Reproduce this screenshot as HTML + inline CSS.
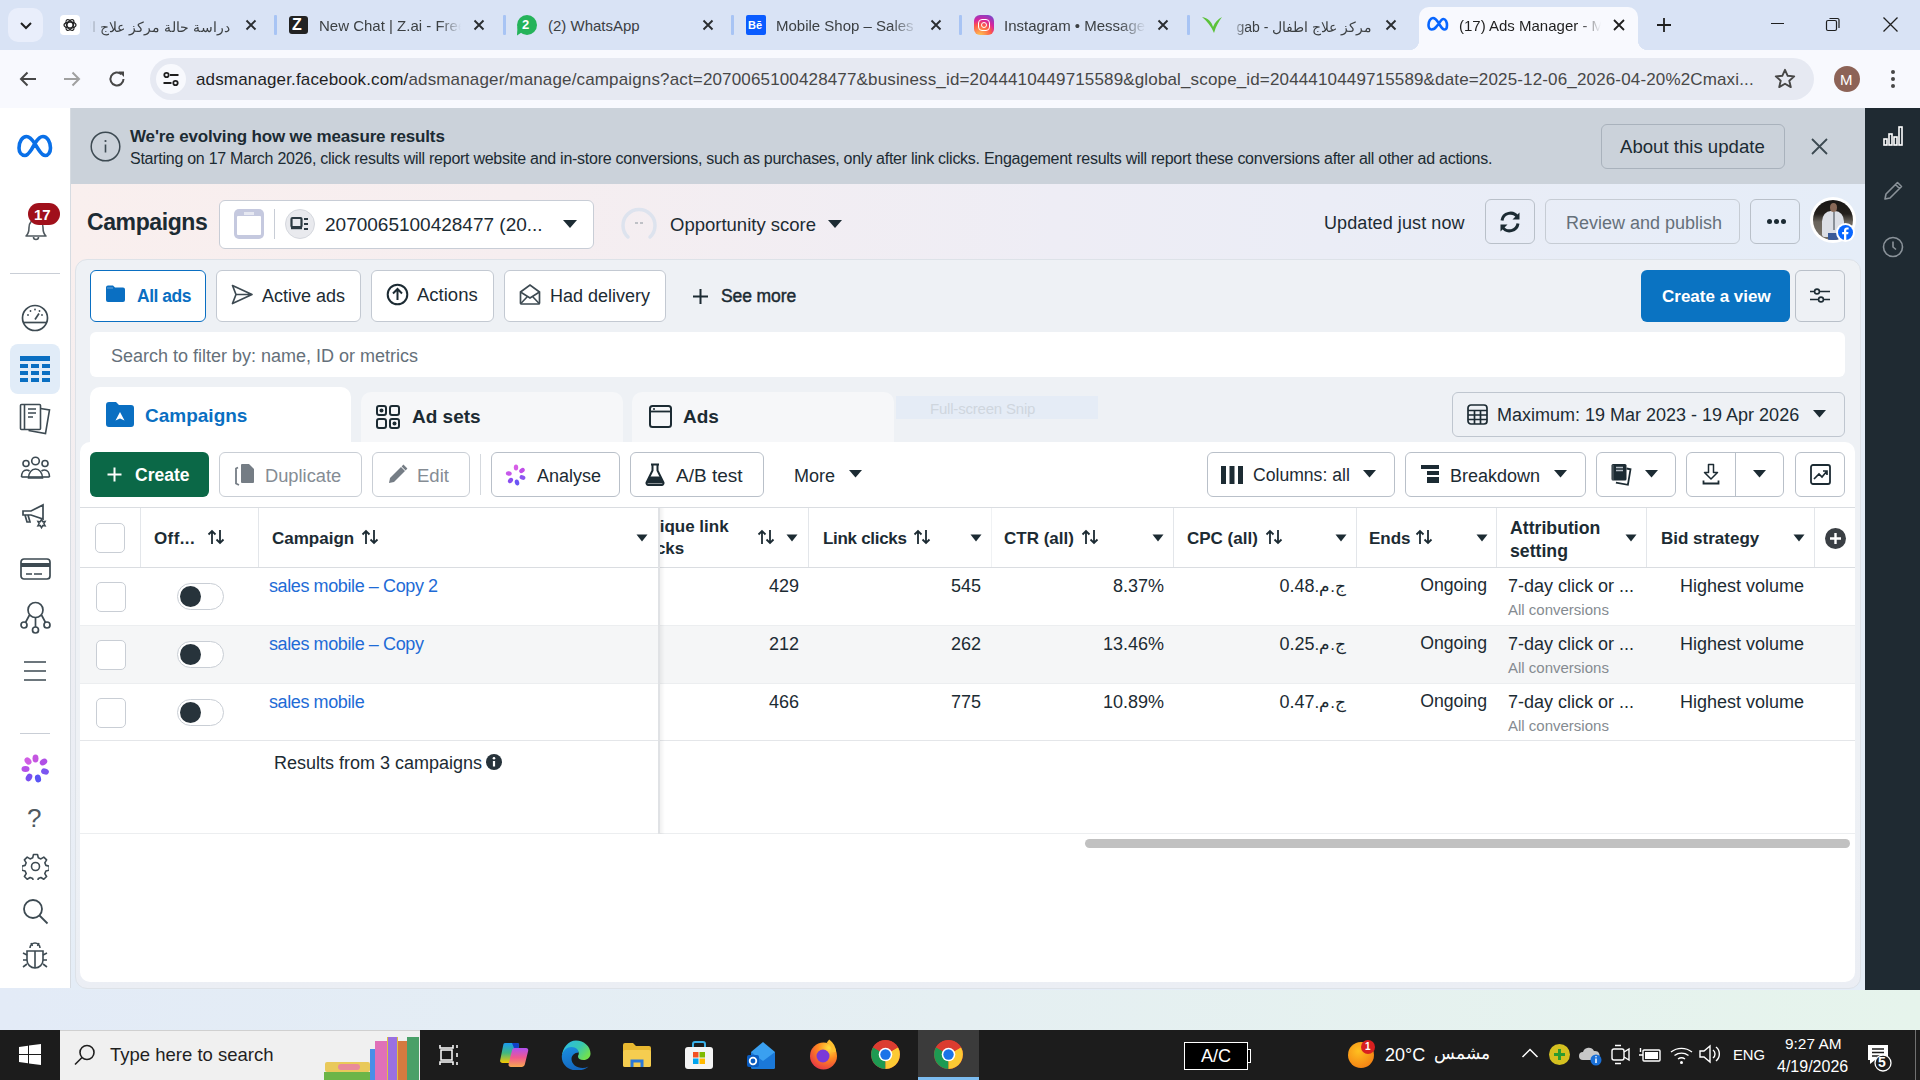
<!DOCTYPE html>
<html><head><meta charset="utf-8">
<style>
*{box-sizing:border-box;margin:0;padding:0}
html,body{width:1920px;height:1080px;overflow:hidden;background:linear-gradient(90deg,#e3ebf7 0%,#e5eff2 50%,#e6f4ec 100%);font-family:"Liberation Sans",sans-serif;color:#1c2b33}
.a{position:absolute}
.t{position:absolute;white-space:nowrap;line-height:1}
svg{display:block}
/* chrome */
#tabstrip{left:0;top:0;width:1920px;height:50px;background:#d9e3f5}
#toolbar{left:0;top:50px;width:1920px;height:58px;background:#f8f9fe}
#omni{left:150px;top:58px;width:1664px;height:42px;border-radius:21px;background:#e6e9f2}
.tab{position:absolute;top:0;height:50px}
.tabtitle{position:absolute;top:15.5px;font-size:15px;color:#1f1f1f;white-space:nowrap;line-height:20px}
.tabx{position:absolute;top:17px;width:16px;height:16px}
.tsep{position:absolute;top:15px;width:2.5px;height:20px;background:#a8c4f4;border-radius:1px}
/* page */
#leftnav{left:0;top:108px;width:71px;height:880px;background:#fff;border-right:1px solid #d6dbe1}
#rightbar{left:1865px;top:108px;width:55px;height:882px;background:#1f2a32}
#banner{left:70px;top:108px;width:1795px;height:76px;background:#cbd2da}
#header{left:70px;top:184px;width:1795px;height:806px;background:linear-gradient(180deg,rgba(228,237,247,0) 0px,rgba(228,237,247,0) 80px,rgba(228,237,247,1) 100%),linear-gradient(90deg,#f9efee 0%,#f6eef0 25%,#eeedf5 55%,#e5edf8 100%)}
#main{left:70px;top:260px;width:1794px;height:730px;background:linear-gradient(180deg,#eef1f5 0%,#eef1f5 60%,#e8eff5 100%)}
#taskbar{left:0;top:1030px;width:1920px;height:50px;background:#1c1c1c}
.btn{position:absolute;background:#fff;border:1px solid #c3c9d2;border-radius:6px}
.bt{position:absolute;white-space:nowrap;line-height:1;font-size:18px;color:#1c2b33}
</style></head><body>

<!-- ============ CHROME TAB STRIP ============ -->

<div id="tabstrip" class="a"></div>
<div class="a" style="left:8px;top:8px;width:35px;height:34px;border-radius:10px;background:#e9eefb"></div>
<svg class="a" style="left:18px;top:17px" width="16" height="16" viewBox="0 0 16 16"><path d="M3 6l5 5 5-5" fill="none" stroke="#1f1f1f" stroke-width="2"/></svg>
<!-- active tab -->
<div class="a" style="left:1419px;top:7px;width:219px;height:43px;background:#f8f9fe;border-radius:10px 10px 0 0"></div>
<div class="a" style="left:1409px;top:40px;width:10px;height:10px;background:radial-gradient(circle at 0 0,#d9e3f5 10px,#f8f9fe 10.5px)"></div>
<div class="a" style="left:1638px;top:40px;width:10px;height:10px;background:radial-gradient(circle at 100% 0,#d9e3f5 10px,#f8f9fe 10.5px)"></div>
<!-- tab 1 -->
<div class="a" style="left:60px;top:15px;width:20px;height:20px;background:#fff;border-radius:4px"></div>
<svg class="a" style="left:62px;top:17px" width="16" height="16" viewBox="0 0 16 16"><g fill="none" stroke="#222" stroke-width="1.3"><ellipse cx="8" cy="8" rx="6" ry="3" transform="rotate(0 8 8)"/><ellipse cx="8" cy="8" rx="6" ry="3" transform="rotate(60 8 8)"/><ellipse cx="8" cy="8" rx="6" ry="3" transform="rotate(120 8 8)"/></g></svg>
<div class="tabtitle" dir="rtl" style="left:90px;width:140px;overflow:hidden;text-align:right;font-size:14px;top:16.5px;color:#3c4043;-webkit-mask-image:linear-gradient(90deg,transparent 0,#000 14px)">دراسة حالة مركز علاج الاطفال</div>
<svg class="tabx" style="left:243px"><path d="M3.5 3.5l9 9M12.5 3.5l-9 9" stroke="#2a2d30" stroke-width="1.9"/></svg>
<div class="tsep" style="left:274px"></div>
<!-- tab 2 -->
<div class="a" style="left:289px;top:16px;width:19px;height:18px;background:#222;border-radius:3px"></div>
<div class="t" style="left:292px;top:17px;font-size:16px;font-weight:bold;color:#fff">Z</div>
<div class="tabtitle" style="left:319px;width:142px;overflow:hidden;-webkit-mask-image:linear-gradient(90deg,#000 120px,transparent 142px);color:#3c4043">New Chat | Z.ai - Free</div>
<svg class="tabx" style="left:471px"><path d="M3.5 3.5l9 9M12.5 3.5l-9 9" stroke="#2a2d30" stroke-width="1.9"/></svg>
<div class="tsep" style="left:503px"></div>
<!-- tab 3 -->
<div class="a" style="left:517px;top:15px;width:20px;height:20px;background:#25b35a;border-radius:50%"></div>
<div class="a" style="left:515px;top:28px;width:0;height:0;border-left:4px solid transparent;border-right:4px solid transparent;border-top:8px solid #25b35a;transform:rotate(30deg)"></div>
<div class="t" style="left:522px;top:18px;font-size:13px;font-weight:bold;color:#fff">2</div>
<div class="tabtitle" style="left:548px;color:#3c4043">(2) WhatsApp</div>
<svg class="tabx" style="left:700px"><path d="M3.5 3.5l9 9M12.5 3.5l-9 9" stroke="#2a2d30" stroke-width="1.9"/></svg>
<div class="tsep" style="left:731px"></div>
<!-- tab 4 -->
<div class="a" style="left:746px;top:15px;width:20px;height:20px;background:#0b5cff;border-radius:2px"></div>
<div class="t" style="left:748px;top:20px;font-size:11px;font-weight:bold;color:#fff">Bē</div>
<div class="tabtitle" style="left:776px;width:142px;overflow:hidden;-webkit-mask-image:linear-gradient(90deg,#000 115px,transparent 142px);color:#3c4043">Mobile Shop – Sales Dashboard</div>
<svg class="tabx" style="left:928px"><path d="M3.5 3.5l9 9M12.5 3.5l-9 9" stroke="#2a2d30" stroke-width="1.9"/></svg>
<div class="tsep" style="left:959px"></div>
<!-- tab 5 -->
<div class="a" style="left:974px;top:15px;width:20px;height:20px;border-radius:6px;background:radial-gradient(circle at 30% 105%,#fdcb52 0,#fd5949 45%,#d6249f 65%,#5b51d8 100%)"></div>
<div class="a" style="left:978px;top:19px;width:12px;height:12px;border:1.6px solid #fff;border-radius:4px"></div>
<div class="a" style="left:981px;top:22px;width:6px;height:6px;border:1.5px solid #fff;border-radius:50%"></div>
<div class="tabtitle" style="left:1004px;width:142px;overflow:hidden;-webkit-mask-image:linear-gradient(90deg,#000 115px,transparent 142px);color:#3c4043">Instagram • Messages</div>
<svg class="tabx" style="left:1155px"><path d="M3.5 3.5l9 9M12.5 3.5l-9 9" stroke="#2a2d30" stroke-width="1.9"/></svg>
<div class="tsep" style="left:1187px"></div>
<!-- tab 6 -->
<svg class="a" style="left:1200px;top:14px" width="24" height="22" viewBox="0 0 24 22"><path d="M2 3c6 1 10 5 11 10 2-5 5-8 9-10-3 4-6 9-8 16-3-7-7-12-12-16z" fill="#5cc23a"/></svg>
<div class="tabtitle" dir="rtl" style="left:1232px;width:140px;overflow:hidden;text-align:right;font-size:14px;top:16.5px;color:#3c4043;-webkit-mask-image:linear-gradient(90deg,transparent 0,#000 14px)">مركز علاج اطفال - gab</div>
<svg class="tabx" style="left:1383px"><path d="M3.5 3.5l9 9M12.5 3.5l-9 9" stroke="#2a2d30" stroke-width="1.9"/></svg>
<!-- tab 7 active -->
<svg class="a" style="left:1427px;top:16px" width="22" height="16" viewBox="0 0 22 16"><path d="M4.5 13.5C2.5 13.5 1.5 11.5 1.5 9c0-3.5 2-7 4.5-7 2.2 0 3.7 2 5 4.2L13.5 10c1.2 2 2.3 3.5 3.8 3.5 1.8 0 2.7-1.7 2.7-4.3 0-3.3-1.5-6.2-3.5-6.2-1.8 0-3 1.8-4.5 4.5L9.5 10.5c-1.5 2.3-2.8 3-5 3z" fill="none" stroke="#0866ff" stroke-width="2.6"/></svg>
<div class="tabtitle" style="left:1459px;width:142px;overflow:hidden;-webkit-mask-image:linear-gradient(90deg,#000 120px,transparent 142px)">(17) Ads Manager - Meta</div>
<svg class="tabx" style="left:1611px"><path d="M3 3l10 10M13 3L3 13" stroke="#1f1f1f" stroke-width="1.8"/></svg>
<!-- new tab -->
<svg class="a" style="left:1655px;top:16px" width="18" height="18" viewBox="0 0 18 18"><path d="M9 2v14M2 9h14" stroke="#1f1f1f" stroke-width="1.8"/></svg>
<!-- window controls -->
<div class="a" style="left:1771px;top:23px;width:13px;height:1px;background:#1f1f1f"></div>
<svg class="a" style="left:1825px;top:16px" width="16" height="16" viewBox="0 0 16 16"><g fill="none" stroke="#1f1f1f" stroke-width="1.2"><rect x="1.5" y="4.5" width="10" height="10" rx="1.5"/><path d="M4.5 2.5h8a1.5 1.5 0 0 1 1.5 1.5v8"/></g></svg>
<svg class="a" style="left:1882px;top:16px" width="17" height="17" viewBox="0 0 17 17"><path d="M1.5 1.5l14 14M15.5 1.5l-14 14" stroke="#1f1f1f" stroke-width="1.3"/></svg>

<div id="toolbar" class="a"></div>
<div id="omni" class="a"></div>
<svg class="a" style="left:17px;top:68px" width="22" height="22" viewBox="0 0 22 22"><path d="M19 11H4M10.5 4.5L4 11l6.5 6.5" fill="none" stroke="#474747" stroke-width="2"/></svg>
<svg class="a" style="left:61px;top:68px" width="22" height="22" viewBox="0 0 22 22"><path d="M3 11h15M11.5 4.5L18 11l-6.5 6.5" fill="none" stroke="#a0a0a0" stroke-width="2"/></svg>
<svg class="a" style="left:106px;top:68px" width="22" height="22" viewBox="0 0 22 22"><path d="M17.5 11a6.5 6.5 0 1 1-2-4.7" fill="none" stroke="#474747" stroke-width="2"/><path d="M12.5 3.5h5.5v5.5z" fill="#474747"/></svg>
<div class="a" style="left:156px;top:64px;width:30px;height:30px;border-radius:50%;background:#f8f9fd"></div>
<svg class="a" style="left:162px;top:70px" width="18" height="18" viewBox="0 0 18 18"><g fill="none" stroke="#1f1f1f" stroke-width="1.8"><circle cx="4.5" cy="5" r="2.2"/><path d="M8 5h8.5M1.5 13h8"/><circle cx="13.5" cy="13" r="2.2"/></g></svg>
<div class="t" style="left:196px;top:71px;font-size:17px;letter-spacing:0.15px;color:#1f1f1f">adsmanager.facebook.com/<span style="color:#474747">adsmanager/manage/campaigns?act=2070065100428477&amp;business_id=2044410449715589&amp;global_scope_id=2044410449715589&amp;date=2025-12-06_2026-04-20%2Cmaxi...</span></div>
<svg class="a" style="left:1773px;top:67px" width="24" height="24" viewBox="0 0 24 24"><path d="M12 2.8l2.7 6 6.5.6-4.9 4.3 1.5 6.4L12 16.7l-5.8 3.4 1.5-6.4-4.9-4.3 6.5-.6z" fill="none" stroke="#474747" stroke-width="1.9" stroke-linejoin="round"/></svg>
<div class="a" style="left:1834px;top:66px;width:26px;height:26px;border-radius:50%;background:#8d6357"></div>
<div class="t" style="left:1840px;top:72px;font-size:15px;color:#fff">M</div>
<div class="a" style="left:1891px;top:70px;width:4px;height:4px;border-radius:50%;background:#474747;box-shadow:0 7px 0 #474747,0 14px 0 #474747"></div>


<!-- ============ PAGE ============ -->

<div id="banner" class="a"></div>
<svg class="a" style="left:90px;top:131px" width="31" height="31" viewBox="0 0 31 31"><circle cx="15.5" cy="15.5" r="14.3" fill="none" stroke="#3d4a52" stroke-width="1.5"/><path d="M15.5 13.5v8" stroke="#3d4a52" stroke-width="1.6"/><circle cx="15.5" cy="10" r="1.1" fill="#3d4a52"/></svg>
<div class="t" style="left:130px;top:128px;font-size:17px;font-weight:bold;letter-spacing:-0.15px;color:#1c2b33">We're evolving how we measure results</div>
<div class="t" style="left:130px;top:151px;font-size:16px;letter-spacing:-0.265px;color:#1c2b33">Starting on 17 March 2026, click results will report website and in-store conversions, such as purchases, only after link clicks. Engagement results will report these conversions after all other ad actions.</div>
<div class="btn" style="left:1601px;top:124px;width:184px;height:45px;background:#cbd2da;border-color:#a9b2bc"></div>
<div class="bt" style="left:1620px;top:138px;font-size:18.6px">About this update</div>
<svg class="a" style="left:1810px;top:137px" width="19" height="19" viewBox="0 0 19 19"><path d="M2 2l15 15M17 2L2 17" stroke="#3d4a52" stroke-width="1.8"/></svg>

<div id="header" class="a"></div>
<div class="t" style="left:87px;top:211px;font-size:23px;font-weight:bold;letter-spacing:-0.4px;color:#1c2b33">Campaigns</div>
<div class="btn" style="left:219px;top:200px;width:375px;height:49px;border-color:#c8cdd6"></div>
<div class="a" style="left:234px;top:209px;width:30px;height:30px;border-radius:5px;background:#c5c9df"></div>
<div class="a" style="left:237px;top:216px;width:24px;height:19px;background:#fff;border-radius:1px"></div>
<div class="a" style="left:244px;top:212px;width:10px;height:3px;background:#e6e8f1"></div>
<div class="a" style="left:274px;top:209px;width:1px;height:30px;background:#c8cdd6"></div>
<div class="a" style="left:285px;top:209px;width:30px;height:30px;border-radius:50%;background:#e9eaee;border:1px solid #d5d8de"></div>
<svg class="a" style="left:290px;top:214px" width="20" height="20" viewBox="0 0 20 20"><rect x="1.5" y="4" width="10" height="9" rx="1" fill="none" stroke="#2c3a42" stroke-width="2.2"/><rect x="1" y="13" width="11" height="2.2" fill="#2c3a42"/><path d="M14 5h4M14 10h4M14 15h4" stroke="#2c3a42" stroke-width="1.8"/></svg>
<div class="bt" style="left:325px;top:215px;font-size:19px">2070065100428477 (20...</div>
<svg class="a" style="left:562px;top:219px" width="16" height="10" viewBox="0 0 16 10"><path d="M1 1h14L8 9z" fill="#1c2b33"/></svg>
<svg class="a" style="left:620px;top:206px" width="38" height="38" viewBox="0 0 38 38"><path d="M8 31A16 16 0 1 1 30 31" fill="none" stroke="#dde3ee" stroke-width="3.5" stroke-linecap="round"/><path d="M15 17h3M20 17h3" stroke="#8a939b" stroke-width="1.2"/></svg>
<div class="bt" style="left:670px;top:216px;font-size:18.5px">Opportunity score</div>
<svg class="a" style="left:827px;top:219px" width="16" height="10" viewBox="0 0 16 10"><path d="M1 1h14L8 9z" fill="#1c2b33"/></svg>
<div class="bt" style="left:1324px;top:214px;font-size:18px;letter-spacing:0.1px">Updated just now</div>
<div class="btn" style="left:1485px;top:199px;width:50px;height:45px;background:transparent;border-color:#b9c0c9"></div>
<svg class="a" style="left:1497px;top:209px" width="26" height="26" viewBox="0 0 26 26"><g fill="none" stroke="#1c2b33" stroke-width="3"><path d="M5 11.5a8.5 8.5 0 0 1 15.5-3.5"/><path d="M21 14.5a8.5 8.5 0 0 1-15.5 3.5"/></g><path d="M22.5 3.5v7h-7z" fill="#1c2b33"/><path d="M3.5 22.5v-7h7z" fill="#1c2b33"/></svg>
<div class="btn" style="left:1545px;top:199px;width:195px;height:45px;background:transparent;border-color:#c6ccd4"></div>
<div class="bt" style="left:1566px;top:214px;font-size:18px;color:#65707a">Review and publish</div>
<div class="btn" style="left:1750px;top:199px;width:50px;height:45px;background:transparent;border-color:#b9c0c9"></div>
<div class="a" style="left:1767px;top:219px;width:5px;height:5px;border-radius:50%;background:#1c2b33;box-shadow:7px 0 0 #1c2b33,14px 0 0 #1c2b33"></div>
<div class="a" style="left:1810px;top:197px;width:46px;height:46px;border-radius:50%;background:#fff"></div>
<div class="a" style="left:1813px;top:200px;width:40px;height:40px;border-radius:50%;overflow:hidden;background:linear-gradient(180deg,#1a1714 0%,#24201c 35%,#6a645c 55%,#7a746a 100%)">
<div class="a" style="left:9px;top:11px;width:22px;height:26px;border-radius:40% 40% 10% 10%;background:#dcdfe6"></div>
<div class="a" style="left:15px;top:33px;width:11px;height:8px;background:#3a5a98"></div>
<div class="a" style="left:17px;top:3px;width:7px;height:9px;border-radius:50%;background:#8a6a58"></div>
<div class="a" style="left:20px;top:12px;width:1.5px;height:18px;background:#8a9098"></div>
</div>
<div class="a" style="left:1836px;top:223px;width:19px;height:19px;border-radius:50%;background:#fff"></div>
<div class="a" style="left:1838px;top:225px;width:15px;height:15px;border-radius:50%;background:#0866ff"></div>
<svg class="a" style="left:1838px;top:225px" width="15" height="15" viewBox="0 0 15 15"><path d="M8.3 15V9.2h1.9l.3-2.2H8.3V5.6c0-.6.2-1.1 1.1-1.1h1.2V2.6c-.2 0-.9-.1-1.7-.1-1.7 0-2.9 1-2.9 2.9V7H4.1v2.2H6V15z" fill="#fff"/></svg>



<div class="a" style="left:75px;top:259px;width:1786px;height:730px;border-radius:12px;background:linear-gradient(180deg,#eef1f5 0%,#eef1f5 70%,#ebeef4 100%);border:1px solid #dde2e8"></div>
<!-- filter buttons -->
<div class="btn" style="left:90px;top:270px;width:116px;height:52px;border:1.5px solid #0a6fc2"></div>
<svg class="a" style="left:105px;top:284px" width="21" height="19" viewBox="0 0 21 19"><path d="M1 3.5a2 2 0 0 1 2-2h5l2 2h8a2 2 0 0 1 2 2V16a2 2 0 0 1-2 2H3a2 2 0 0 1-2-2z" fill="#0a6fc2"/><path d="M2 4h6" stroke="#6fa6d9" stroke-width="1"/></svg>
<div class="bt" style="left:137px;top:288px;font-size:17.5px;font-weight:bold;letter-spacing:-0.5px;color:#0a6fc2">All ads</div>
<div class="btn" style="left:216px;top:270px;width:145px;height:52px"></div>
<svg class="a" style="left:231px;top:284px" width="23" height="21" viewBox="0 0 23 21"><path d="M1.5 1.5L21 10.5 1.5 19.5 5 10.5z M5 10.5h16" fill="none" stroke="#3d4a52" stroke-width="1.7" stroke-linejoin="round"/></svg>
<div class="bt" style="left:262px;top:287px">Active ads</div>
<div class="btn" style="left:371px;top:270px;width:123px;height:52px"></div>
<svg class="a" style="left:386px;top:283px" width="23" height="23" viewBox="0 0 23 23"><circle cx="11.5" cy="11.5" r="9.8" fill="none" stroke="#1c2b33" stroke-width="2"/><path d="M11.5 17V6.5M7 10.5l4.5-4.5 4.5 4.5" fill="none" stroke="#1c2b33" stroke-width="2"/></svg>
<div class="bt" style="left:417px;top:286px;font-size:18.5px">Actions</div>
<div class="btn" style="left:504px;top:270px;width:162px;height:52px"></div>
<svg class="a" style="left:519px;top:283px" width="22" height="22" viewBox="0 0 22 22"><path d="M1.5 9L11 2l9.5 7v11a1 1 0 0 1-1 1h-17a1 1 0 0 1-1-1z" fill="none" stroke="#3d4a52" stroke-width="1.7"/><path d="M1.5 9L11 15l9.5-6M1.8 20.5L8.5 13.5M20.2 20.5L13.5 13.5" fill="none" stroke="#3d4a52" stroke-width="1.6"/></svg>
<div class="bt" style="left:550px;top:287px">Had delivery</div>
<svg class="a" style="left:691px;top:287px" width="19" height="19" viewBox="0 0 19 19"><path d="M9.5 2v15M2 9.5h15" stroke="#1c2b33" stroke-width="2"/></svg>
<div class="bt" style="left:721px;top:288px;font-size:17.5px;letter-spacing:-0.1px;-webkit-text-stroke:0.45px #1c2b33">See more</div>
<div class="a" style="left:1641px;top:270px;width:149px;height:52px;border-radius:6px;background:#0a73c2"></div>
<div class="bt" style="left:1662px;top:288px;font-size:17px;font-weight:bold;color:#fff">Create a view</div>
<div class="btn" style="left:1795px;top:270px;width:50px;height:52px;background:#eef1f5;border-color:#b9c0c9"></div>
<svg class="a" style="left:1808px;top:284px" width="24" height="24" viewBox="0 0 24 24"><g fill="none" stroke="#1c2b33" stroke-width="1.6"><path d="M2 7.5h4.5M11.5 7.5H22M2 15.5h8.5M15.5 15.5H22"/><circle cx="9" cy="7.5" r="2.4"/><circle cx="13" cy="15.5" r="2.4"/></g></svg>

<!-- level tabs -->
<div class="a" style="left:90px;top:387px;width:261px;height:60px;border-radius:10px 10px 0 0;background:#fff"></div>
<svg class="a" style="left:106px;top:402px" width="28" height="25" viewBox="0 0 28 25"><path d="M0 3a3 3 0 0 1 3-3h7l3 3h12a3 3 0 0 1 3 3v16a3 3 0 0 1-3 3H3a3 3 0 0 1-3-3z" fill="#0a6fc2"/><path d="M9.5 18.5L14 10l4.5 8.5L14 16.5z" fill="#fff"/></svg>
<div class="bt" style="left:145px;top:406px;font-size:19px;font-weight:bold;color:#0a6fc2">Campaigns</div>
<div class="a" style="left:361px;top:392px;width:262px;height:55px;border-radius:10px 10px 0 0;background:#f6f7f9"></div>
<svg class="a" style="left:376px;top:405px" width="24" height="24" viewBox="0 0 24 24"><g fill="none" stroke="#1c2b33" stroke-width="2"><rect x="1" y="1" width="9" height="9" rx="2"/><rect x="14" y="1" width="9" height="9" rx="2"/><rect x="1" y="14" width="9" height="9" rx="2"/><rect x="14" y="14" width="9" height="9" rx="2"/></g><circle cx="5.5" cy="5.5" r="2" fill="#1c2b33"/><circle cx="18.5" cy="18.5" r="2" fill="#1c2b33"/></svg>
<div class="bt" style="left:412px;top:407px;font-size:19px;font-weight:bold">Ad sets</div>
<div class="a" style="left:632px;top:392px;width:262px;height:55px;border-radius:10px 10px 0 0;background:#f6f7f9"></div>
<svg class="a" style="left:649px;top:405px" width="23" height="23" viewBox="0 0 23 23"><rect x="1" y="1" width="21" height="21" rx="2.5" fill="none" stroke="#1c2b33" stroke-width="2"/><path d="M1.5 6.5h20" stroke="#1c2b33" stroke-width="1.8"/><circle cx="5" cy="4" r="1" fill="#1c2b33"/></svg>
<div class="bt" style="left:683px;top:407px;font-size:19px;font-weight:bold">Ads</div>
<div class="a" style="left:896px;top:396px;width:202px;height:23px;background:#e5ecf6"></div>
<div class="bt" style="left:930px;top:401px;font-size:15px;letter-spacing:-0.2px;color:#cfd6de">Full-screen Snip</div>
<!-- date -->
<div class="btn" style="left:1452px;top:392px;width:393px;height:45px;background:#eef1f5;border-color:#bfc6cf"></div>
<svg class="a" style="left:1467px;top:404px" width="21" height="21" viewBox="0 0 21 21"><g fill="none" stroke="#1c2b33" stroke-width="1.7"><rect x="1" y="1" width="19" height="19" rx="3"/><path d="M1 6.5h19M1 11h19M1 15.5h19M7.5 6.5V20M13.5 6.5V20"/></g></svg>
<div class="bt" style="left:1497px;top:406px;font-size:18px">Maximum: 19 Mar 2023 - 19 Apr 2026</div>
<svg class="a" style="left:1813px;top:410px" width="13" height="8" viewBox="0 0 13 8"><path d="M0 0h13L6.5 7.5z" fill="#1c2b33"/></svg>
<!-- table card -->
<div class="a" style="left:80px;top:442px;width:1775px;height:540px;border-radius:10px;background:#fff"></div>
<div class="a" style="left:90px;top:430px;width:261px;height:20px;background:#fff"></div>
<!-- toolbar -->
<div class="a" style="left:90px;top:452px;width:119px;height:45px;border-radius:6px;background:#0b6847"></div>
<svg class="a" style="left:107px;top:467px" width="15" height="15" viewBox="0 0 15 15"><path d="M7.5 0.5v14M0.5 7.5h14" stroke="#fff" stroke-width="2"/></svg>
<div class="bt" style="left:135px;top:467px;font-size:17.5px;font-weight:bold;color:#fff">Create</div>
<div class="btn" style="left:219px;top:452px;width:143px;height:45px;border-color:#c9ced5"></div>
<svg class="a" style="left:233px;top:463px" width="22" height="23" viewBox="0 0 22 23"><path d="M9 1h7l5 5v13a1 1 0 0 1-1 1H9a1 1 0 0 1-1-1V2a1 1 0 0 1 1-1z" fill="#757d85"/><path d="M5 4.5L3 5.5v15l3 1.5" fill="none" stroke="#757d85" stroke-width="1.8"/></svg>
<div class="bt" style="left:265px;top:467px;font-size:18.3px;color:#858c94">Duplicate</div>
<div class="btn" style="left:372px;top:452px;width:98px;height:45px;border-color:#c9ced5"></div>
<svg class="a" style="left:387px;top:464px" width="21" height="21" viewBox="0 0 21 21"><path d="M2 19l1-5L14 3l4 4L7 18z" fill="#757d85"/><path d="M15.5 1.5l4 4" stroke="#757d85" stroke-width="2.5"/></svg>
<div class="bt" style="left:417px;top:467px;font-size:18.5px;color:#858c94">Edit</div>
<div class="a" style="left:480px;top:454px;width:1px;height:41px;background:#d5d9de"></div>
<div class="btn" style="left:491px;top:452px;width:129px;height:45px;border-color:#b9c0c9"></div>
<svg class="a" style="left:505px;top:464px" width="22" height="22" viewBox="0 0 22 22"><g><ellipse cx="11" cy="3.5" rx="2.2" ry="3" fill="#d65ee6"/><ellipse cx="17" cy="6.5" rx="2.2" ry="3" transform="rotate(55 17 6.5)" fill="#c04ee8"/><ellipse cx="17.5" cy="13.5" rx="2.2" ry="3" transform="rotate(110 17.5 13.5)" fill="#8a55f0"/><ellipse cx="12" cy="18.5" rx="2.2" ry="3" transform="rotate(165 12 18.5)" fill="#6a55f5"/><ellipse cx="5.5" cy="16.5" rx="2.2" ry="3" transform="rotate(-140 5.5 16.5)" fill="#8a4ef0"/><ellipse cx="3.8" cy="9.5" rx="2.2" ry="3" transform="rotate(-80 3.8 9.5)" fill="#c658ea"/></g></svg>
<div class="bt" style="left:537px;top:467px;font-size:18px">Analyse</div>
<div class="btn" style="left:630px;top:452px;width:134px;height:45px;border-color:#b9c0c9"></div>
<svg class="a" style="left:645px;top:463px" width="20" height="23" viewBox="0 0 20 23"><path d="M6 1.5h8M7.5 1.5v6L1.5 19.5a2 2 0 0 0 1.8 2.5h13.4a2 2 0 0 0 1.8-2.5L12.5 7.5v-6" fill="none" stroke="#1c2b33" stroke-width="2"/><path d="M4.5 13.5h11l3 7H1.5z" fill="#1c2b33"/></svg>
<div class="bt" style="left:676px;top:466px;font-size:19px">A/B test</div>
<div class="bt" style="left:794px;top:467px;font-size:18px">More</div>
<svg class="a" style="left:849px;top:470px" width="13" height="8" viewBox="0 0 13 8"><path d="M0 0h13L6.5 7.5z" fill="#1c2b33"/></svg>
<div class="btn" style="left:1207px;top:452px;width:188px;height:45px;border-color:#b9c0c9"></div>
<svg class="a" style="left:1221px;top:466px" width="22" height="18" viewBox="0 0 22 18"><rect x="0" y="0" width="5" height="18" fill="#1c2b33"/><rect x="8.5" y="0" width="5" height="18" fill="#1c2b33"/><rect x="17" y="0" width="5" height="18" fill="#1c2b33"/></svg>
<div class="bt" style="left:1253px;top:467px;font-size:17.6px">Columns: all</div>
<svg class="a" style="left:1363px;top:470px" width="13" height="8" viewBox="0 0 13 8"><path d="M0 0h13L6.5 7.5z" fill="#1c2b33"/></svg>
<div class="btn" style="left:1405px;top:452px;width:181px;height:45px;border-color:#b9c0c9"></div>
<svg class="a" style="left:1421px;top:465px" width="20" height="20" viewBox="0 0 20 20"><rect x="0" y="0" width="18" height="4" fill="#1c2b33"/><rect x="6" y="6" width="12" height="4" fill="#1c2b33"/><rect x="6" y="12" width="12" height="6" fill="#1c2b33"/></svg>
<div class="bt" style="left:1450px;top:467px;font-size:18px">Breakdown</div>
<svg class="a" style="left:1554px;top:470px" width="13" height="8" viewBox="0 0 13 8"><path d="M0 0h13L6.5 7.5z" fill="#1c2b33"/></svg>
<div class="btn" style="left:1596px;top:452px;width:80px;height:45px;border-color:#b9c0c9"></div>
<svg class="a" style="left:1610px;top:463px" width="23" height="23" viewBox="0 0 23 23"><path d="M16.5 5.5l4 .8-2.6 15.5-12-2.2" fill="none" stroke="#1c2b33" stroke-width="1.8"/><rect x="1.5" y="1" width="15" height="16.5" rx="1.5" fill="#1c2b33"/><path d="M6 4.5h7M6 7.5h7" stroke="#b8c0c8" stroke-width="1.3"/><path d="M3 2v15" stroke="#fff" stroke-width="0.6" opacity="0.5"/></svg>
<svg class="a" style="left:1645px;top:470px" width="13" height="8" viewBox="0 0 13 8"><path d="M0 0h13L6.5 7.5z" fill="#1c2b33"/></svg>
<div class="btn" style="left:1686px;top:452px;width:98px;height:45px;border-color:#b9c0c9"></div>
<div class="a" style="left:1735px;top:453px;width:1px;height:43px;background:#b9c0c9"></div>
<svg class="a" style="left:1702px;top:463px" width="18" height="22" viewBox="0 0 18 22"><path d="M6.5 1.5h5v8h4L9 16 2.5 9.5h4z" fill="none" stroke="#1c2b33" stroke-width="1.5" stroke-linejoin="round"/><path d="M1.5 17.5v3h15v-3" fill="none" stroke="#1c2b33" stroke-width="1.8"/></svg>
<svg class="a" style="left:1753px;top:470px" width="13" height="8" viewBox="0 0 13 8"><path d="M0 0h13L6.5 7.5z" fill="#1c2b33"/></svg>
<div class="btn" style="left:1795px;top:452px;width:50px;height:45px;border-color:#b9c0c9"></div>
<svg class="a" style="left:1810px;top:464px" width="21" height="21" viewBox="0 0 21 21"><rect x="1" y="1" width="19" height="19" rx="2" fill="none" stroke="#1c2b33" stroke-width="1.8"/><path d="M4 15l5-5 3 3 5-6M13 7h4v4" fill="none" stroke="#1c2b33" stroke-width="1.7"/></svg>


<!-- table -->
<div class="a" style="left:80px;top:507px;width:1775px;height:1px;background:#dadde1"></div>
<div class="a" style="left:80px;top:567px;width:1775px;height:1px;background:#dadde1"></div>
<div class="a" style="left:140px;top:508px;width:1px;height:59px;background:#e3e6ea"></div>
<div class="a" style="left:258px;top:508px;width:1px;height:59px;background:#e3e6ea"></div>
<div class="a" style="left:808px;top:508px;width:1px;height:59px;background:#e3e6ea"></div>
<div class="a" style="left:1173px;top:508px;width:1px;height:59px;background:#e3e6ea"></div>
<div class="a" style="left:1356px;top:508px;width:1px;height:59px;background:#e3e6ea"></div>
<div class="a" style="left:1496px;top:508px;width:1px;height:59px;background:#e3e6ea"></div>
<div class="a" style="left:1646px;top:508px;width:1px;height:59px;background:#e3e6ea"></div>
<div class="a" style="left:1814px;top:508px;width:1px;height:59px;background:#e3e6ea"></div>
<div class="a" style="left:991px;top:508px;width:1px;height:59px;background:#f0f2f4"></div>
<div class="a" style="left:80px;top:625px;width:1775px;height:58px;background:#f5f6f7"></div>
<div class="a" style="left:80px;top:625px;width:1775px;height:1px;background:#eceef0"></div>
<div class="a" style="left:80px;top:683px;width:1775px;height:1px;background:#eceef0"></div>
<div class="a" style="left:80px;top:740px;width:1775px;height:1px;background:#e4e6e9"></div>
<div class="a" style="left:80px;top:833px;width:1775px;height:1px;background:#eceef0"></div>
<div class="a" style="left:658px;top:508px;width:2px;height:326px;background:#e0e2e5"></div>
<div class="a" style="left:660px;top:508px;width:5px;height:326px;background:linear-gradient(90deg,rgba(0,0,0,0.06),rgba(0,0,0,0))"></div>
<div class="a" style="left:95px;top:523px;width:30px;height:30px;border:1px solid #c9ced5;border-radius:5px;background:#fff"></div>
<div class="bt" style="left:154px;top:530px;font-size:17px;font-weight:bold;letter-spacing:0.4px">Off...</div>
<svg class="a" style="left:207px;top:529px" width="18" height="16" viewBox="0 0 18 16"><g fill="none" stroke="#1c2b33" stroke-width="1.8"><path d="M5 15V2M1.5 5.5L5 2l3.5 3.5"/><path d="M13 1v13M9.5 10.5L13 14l3.5-3.5"/></g></svg>
<div class="bt" style="left:272px;top:530px;font-size:17px;font-weight:bold">Campaign</div>
<svg class="a" style="left:361px;top:529px" width="18" height="16" viewBox="0 0 18 16"><g fill="none" stroke="#1c2b33" stroke-width="1.8"><path d="M5 15V2M1.5 5.5L5 2l3.5 3.5"/><path d="M13 1v13M9.5 10.5L13 14l3.5-3.5"/></g></svg>
<svg class="a" style="left:636px;top:534px" width="12" height="8" viewBox="0 0 12 8"><path d="M0.5 0.5h11L6 7.5z" fill="#1c2b33"/></svg>
<div class="a" style="left:660px;top:510px;width:148px;height:55px;overflow:hidden"><div class="bt" style="left:-23px;top:6px;font-size:17px;font-weight:bold;line-height:22px">Unique link<br>clicks</div></div>
<svg class="a" style="left:757px;top:529px" width="18" height="16" viewBox="0 0 18 16"><g fill="none" stroke="#1c2b33" stroke-width="1.8"><path d="M5 15V2M1.5 5.5L5 2l3.5 3.5"/><path d="M13 1v13M9.5 10.5L13 14l3.5-3.5"/></g></svg>
<svg class="a" style="left:786px;top:534px" width="12" height="8" viewBox="0 0 12 8"><path d="M0.5 0.5h11L6 7.5z" fill="#1c2b33"/></svg>
<div class="bt" style="left:823px;top:530px;font-size:17px;font-weight:bold;letter-spacing:-0.3px">Link clicks</div>
<svg class="a" style="left:913px;top:529px" width="18" height="16" viewBox="0 0 18 16"><g fill="none" stroke="#1c2b33" stroke-width="1.8"><path d="M5 15V2M1.5 5.5L5 2l3.5 3.5"/><path d="M13 1v13M9.5 10.5L13 14l3.5-3.5"/></g></svg>
<svg class="a" style="left:970px;top:534px" width="12" height="8" viewBox="0 0 12 8"><path d="M0.5 0.5h11L6 7.5z" fill="#1c2b33"/></svg>
<div class="bt" style="left:1004px;top:530px;font-size:17px;font-weight:bold">CTR (all)</div>
<svg class="a" style="left:1081px;top:529px" width="18" height="16" viewBox="0 0 18 16"><g fill="none" stroke="#1c2b33" stroke-width="1.8"><path d="M5 15V2M1.5 5.5L5 2l3.5 3.5"/><path d="M13 1v13M9.5 10.5L13 14l3.5-3.5"/></g></svg>
<svg class="a" style="left:1152px;top:534px" width="12" height="8" viewBox="0 0 12 8"><path d="M0.5 0.5h11L6 7.5z" fill="#1c2b33"/></svg>
<div class="bt" style="left:1187px;top:530px;font-size:17px;font-weight:bold">CPC (all)</div>
<svg class="a" style="left:1265px;top:529px" width="18" height="16" viewBox="0 0 18 16"><g fill="none" stroke="#1c2b33" stroke-width="1.8"><path d="M5 15V2M1.5 5.5L5 2l3.5 3.5"/><path d="M13 1v13M9.5 10.5L13 14l3.5-3.5"/></g></svg>
<svg class="a" style="left:1335px;top:534px" width="12" height="8" viewBox="0 0 12 8"><path d="M0.5 0.5h11L6 7.5z" fill="#1c2b33"/></svg>
<div class="bt" style="left:1369px;top:530px;font-size:17px;font-weight:bold">Ends</div>
<svg class="a" style="left:1415px;top:529px" width="18" height="16" viewBox="0 0 18 16"><g fill="none" stroke="#1c2b33" stroke-width="1.8"><path d="M5 15V2M1.5 5.5L5 2l3.5 3.5"/><path d="M13 1v13M9.5 10.5L13 14l3.5-3.5"/></g></svg>
<svg class="a" style="left:1476px;top:534px" width="12" height="8" viewBox="0 0 12 8"><path d="M0.5 0.5h11L6 7.5z" fill="#1c2b33"/></svg>
<div class="bt" style="left:1510px;top:517px;font-size:17.7px;font-weight:bold;line-height:23px">Attribution<br>setting</div>
<svg class="a" style="left:1625px;top:534px" width="12" height="8" viewBox="0 0 12 8"><path d="M0.5 0.5h11L6 7.5z" fill="#1c2b33"/></svg>
<div class="bt" style="left:1661px;top:530px;font-size:17px;font-weight:bold">Bid strategy</div>
<svg class="a" style="left:1793px;top:534px" width="12" height="8" viewBox="0 0 12 8"><path d="M0.5 0.5h11L6 7.5z" fill="#1c2b33"/></svg>
<svg class="a" style="left:1825px;top:528px" width="21" height="21" viewBox="0 0 21 21"><circle cx="10.5" cy="10.5" r="10.5" fill="#3a3f44"/><path d="M10.5 5v11M5 10.5h11" stroke="#fff" stroke-width="2.4"/></svg>
<div class="a" style="left:96px;top:582px;width:30px;height:30px;border:1px solid #c9ced5;border-radius:5px;background:#fff"></div>
<div class="a" style="left:177px;top:583px;width:47px;height:27px;border:1px solid #c9ced5;border-radius:14px;background:#fff"></div>
<div class="a" style="left:180px;top:586px;width:21px;height:21px;border-radius:50%;background:#27333b"></div>
<div class="bt" style="left:269px;top:577px;font-size:18px;letter-spacing:-0.4px;color:#1e6bd6">sales mobile – Copy 2</div>
<div class="bt" style="right:1121px;top:577px;font-size:18px;color:#1c2b33">429</div>
<div class="bt" style="right:939px;top:577px;font-size:18px;color:#1c2b33">545</div>
<div class="bt" style="right:756px;top:577px;font-size:18px;color:#1c2b33">8.37%</div>
<div class="bt" style="right:574px;top:577px;font-size:18px;color:#1c2b33"><span>0.48</span><span style="font-size:17px">.ج.م</span></div>
<div class="bt" style="right:433px;top:577px;font-size:17.7px;color:#1c2b33">Ongoing</div>
<div class="bt" style="left:1508px;top:577px;font-size:18px;color:#1c2b33">7-day click or ...</div>
<div class="bt" style="left:1508px;top:602px;font-size:15px;color:#858b91">All conversions</div>
<div class="bt" style="left:1680px;top:577px;font-size:18px;color:#1c2b33">Highest volume</div>
<div class="a" style="left:96px;top:640px;width:30px;height:30px;border:1px solid #c9ced5;border-radius:5px;background:#fff"></div>
<div class="a" style="left:177px;top:641px;width:47px;height:27px;border:1px solid #c9ced5;border-radius:14px;background:#fff"></div>
<div class="a" style="left:180px;top:644px;width:21px;height:21px;border-radius:50%;background:#27333b"></div>
<div class="bt" style="left:269px;top:635px;font-size:18px;letter-spacing:-0.4px;color:#1e6bd6">sales mobile – Copy</div>
<div class="bt" style="right:1121px;top:635px;font-size:18px;color:#1c2b33">212</div>
<div class="bt" style="right:939px;top:635px;font-size:18px;color:#1c2b33">262</div>
<div class="bt" style="right:756px;top:635px;font-size:18px;color:#1c2b33">13.46%</div>
<div class="bt" style="right:574px;top:635px;font-size:18px;color:#1c2b33"><span>0.25</span><span style="font-size:17px">.ج.م</span></div>
<div class="bt" style="right:433px;top:635px;font-size:17.7px;color:#1c2b33">Ongoing</div>
<div class="bt" style="left:1508px;top:635px;font-size:18px;color:#1c2b33">7-day click or ...</div>
<div class="bt" style="left:1508px;top:660px;font-size:15px;color:#858b91">All conversions</div>
<div class="bt" style="left:1680px;top:635px;font-size:18px;color:#1c2b33">Highest volume</div>
<div class="a" style="left:96px;top:698px;width:30px;height:30px;border:1px solid #c9ced5;border-radius:5px;background:#fff"></div>
<div class="a" style="left:177px;top:699px;width:47px;height:27px;border:1px solid #c9ced5;border-radius:14px;background:#fff"></div>
<div class="a" style="left:180px;top:702px;width:21px;height:21px;border-radius:50%;background:#27333b"></div>
<div class="bt" style="left:269px;top:693px;font-size:18px;letter-spacing:-0.4px;color:#1e6bd6">sales mobile</div>
<div class="bt" style="right:1121px;top:693px;font-size:18px;color:#1c2b33">466</div>
<div class="bt" style="right:939px;top:693px;font-size:18px;color:#1c2b33">775</div>
<div class="bt" style="right:756px;top:693px;font-size:18px;color:#1c2b33">10.89%</div>
<div class="bt" style="right:574px;top:693px;font-size:18px;color:#1c2b33"><span>0.47</span><span style="font-size:17px">.ج.م</span></div>
<div class="bt" style="right:433px;top:693px;font-size:17.7px;color:#1c2b33">Ongoing</div>
<div class="bt" style="left:1508px;top:693px;font-size:18px;color:#1c2b33">7-day click or ...</div>
<div class="bt" style="left:1508px;top:718px;font-size:15px;color:#858b91">All conversions</div>
<div class="bt" style="left:1680px;top:693px;font-size:18px;color:#1c2b33">Highest volume</div>
<div class="bt" style="left:274px;top:754px;font-size:18px;color:#1c2b33">Results from 3 campaigns</div>
<svg class="a" style="left:486px;top:754px" width="16" height="16" viewBox="0 0 16 16"><circle cx="8" cy="8" r="8" fill="#27333b"/><path d="M8 7v5.5" stroke="#fff" stroke-width="2.2"/><circle cx="8" cy="4.3" r="1.3" fill="#fff"/></svg>
<div class="a" style="left:1085px;top:839px;width:765px;height:9px;border-radius:5px;background:#c1c1c1"></div>
<!-- search -->
<div class="a" style="left:90px;top:332px;width:1755px;height:45px;border-radius:6px;background:#fff"></div>
<div class="bt" style="left:111px;top:347px;font-size:18px;color:#65707a">Search to filter by: name, ID or metrics</div>


<div id="leftnav" class="a"></div>
<svg class="a" style="left:17px;top:134px" width="36" height="24" viewBox="0 0 36 24"><path d="M8 21.5C4.5 21.5 2 18.5 2 14 2 7.5 5.5 2.5 9.5 2.5c3.5 0 6 3.5 8.5 7.5l3.5 5.5c2.3 3.6 4 6 6.8 6 2.8 0 5.2-3 5.2-7.5 0-6.2-3.2-11.5-7.5-11.5-3 0-5.3 2.5-7.8 6.5L14.5 15.5C12.2 19 10.5 21.5 8 21.5z" fill="none" stroke="#0a70e8" stroke-width="3.6"/></svg>
<svg class="a" style="left:22px;top:214px" width="28" height="28" viewBox="0 0 28 28"><path d="M4 22c2.5-2 3-4.5 3-8.5C7 9 10 5.5 14 5.5S21 9 21 13.5c0 4 .5 6.5 3 8.5z" fill="none" stroke="#50595f" stroke-width="1.6" stroke-linejoin="round"/><path d="M11.5 23a2.5 2.5 0 0 0 5 0" fill="none" stroke="#50595f" stroke-width="1.6"/></svg>
<div class="a" style="left:28px;top:203px;width:32px;height:22px;border-radius:11px;background:#a0101b"></div>
<div class="t" style="left:34px;top:207px;font-size:15px;font-weight:bold;color:#fff">17</div>
<div class="a" style="left:10px;top:273px;width:50px;height:1px;background:#c9ced6"></div>
<svg class="a" style="left:21px;top:304px" width="28" height="28" viewBox="0 0 28 28"><g fill="none" stroke="#3d4a52" stroke-width="1.7"><circle cx="14" cy="14" r="12.5"/><path d="M2.5 18.5h23"/><path d="M14 15.5l4-6"/></g><g fill="#3d4a52"><circle cx="7" cy="11" r="0.9"/><circle cx="9.5" cy="7" r="0.9"/><circle cx="14" cy="5.5" r="0.9"/><circle cx="21" cy="11" r="0.9"/><circle cx="18.5" cy="7" r="0.9"/></g></svg>
<div class="a" style="left:10px;top:344px;width:50px;height:50px;border-radius:8px;background:#e1ecf8"></div>
<svg class="a" style="left:20px;top:356px" width="30" height="26" viewBox="0 0 30 26"><rect x="0" y="0" width="30" height="5" fill="#0a6fc2"/><g fill="#0a6fc2"><rect x="0" y="8" width="8" height="4"/><rect x="11" y="8" width="8" height="4"/><rect x="22" y="8" width="8" height="4"/><rect x="0" y="15" width="8" height="4"/><rect x="11" y="15" width="8" height="4"/><rect x="22" y="15" width="8" height="4"/><rect x="0" y="22" width="8" height="4"/><rect x="11" y="22" width="8" height="4"/><rect x="22" y="22" width="8" height="4"/></g></svg>
<svg class="a" style="left:19px;top:403px" width="33" height="32" viewBox="0 0 33 32"><g fill="none" stroke="#3d4a52" stroke-width="1.6"><rect x="1.5" y="1.5" width="20" height="25" rx="1"/><path d="M5.5 1.5v25M9 6h8M9 10h8M9 14h5"/><path d="M21.5 5.5l9 1.5-4 23.5-17-3"/></g></svg>
<svg class="a" style="left:20px;top:456px" width="31" height="24" viewBox="0 0 31 24"><g fill="none" stroke="#3d4a52" stroke-width="1.6"><circle cx="15.5" cy="5" r="3.8"/><circle cx="6" cy="7.5" r="3"/><circle cx="25" cy="7.5" r="3"/><path d="M8.5 22c0-5 3-9 7-9s7 4 7 9z"/><path d="M1.5 21c0-4 2-7 5-7 1.2 0 2.2.4 3 1M29.5 21c0-4-2-7-5-7-1.2 0-2.2.4-3 1"/><path d="M1.5 21h28"/></g></svg>
<svg class="a" style="left:21px;top:503px" width="29" height="28" viewBox="0 0 29 28"><g fill="none" stroke="#3d4a52" stroke-width="1.7"><path d="M2 8h8l12-6v14l-12-4H2z"/><path d="M4 12l2 7h3l-2-7"/></g><path d="M20.5 16.5l1.2 2.2 2.4-.3-1.2 2.2 1.2 2.2-2.4-.2-1.2 2.2-1.2-2.2-2.4.2 1.2-2.2-1.2-2.2 2.4.3z" fill="none" stroke="#3d4a52" stroke-width="1.5"/></svg>
<svg class="a" style="left:20px;top:558px" width="31" height="22" viewBox="0 0 31 22"><g fill="none" stroke="#3d4a52" stroke-width="1.7"><rect x="1" y="1" width="29" height="20" rx="3"/></g><rect x="1" y="5" width="29" height="4" fill="#3d4a52"/><path d="M6 16h6M14 16h8" stroke="#3d4a52" stroke-width="1.5"/></svg>
<svg class="a" style="left:20px;top:601px" width="31" height="33" viewBox="0 0 31 33"><g fill="none" stroke="#3d4a52" stroke-width="1.7"><circle cx="15.5" cy="9" r="7.5"/><circle cx="4" cy="24" r="3"/><circle cx="27" cy="24" r="3"/><circle cx="15.5" cy="29" r="3"/><path d="M15.5 16.5V26M9.5 14l-4 7.5M21.5 14l4 7.5"/></g></svg>
<svg class="a" style="left:23px;top:660px" width="24" height="22" viewBox="0 0 24 22"><path d="M1 2h22M1 11h22M1 20h22" stroke="#3d4a52" stroke-width="1.6"/></svg>
<div class="a" style="left:20px;top:733px;width:30px;height:1px;background:#c9ced6"></div>
<svg class="a" style="left:21px;top:754px" width="30" height="30" viewBox="0 0 30 30"><ellipse cx="14.5" cy="4.5" rx="3" ry="4" fill="#c455e0"/><ellipse cx="22.5" cy="8" rx="3" ry="4" transform="rotate(55 22.5 8)" fill="#b04fe6"/><ellipse cx="24" cy="17.5" rx="3" ry="4" transform="rotate(110 24 17.5)" fill="#7c55f0"/><ellipse cx="17" cy="24.5" rx="3" ry="4" transform="rotate(165 17 24.5)" fill="#5a55f5"/><ellipse cx="8" cy="23.5" rx="3" ry="4" transform="rotate(-150 8 23.5)" fill="#7a4ff0"/><ellipse cx="4.5" cy="15" rx="3" ry="4" transform="rotate(-90 4.5 15)" fill="#b651e8"/><ellipse cx="7" cy="7" rx="3" ry="4" transform="rotate(-40 7 7)" fill="#d05de4"/></svg>
<div class="t" style="left:27px;top:805px;font-size:26px;color:#50595f">?</div>
<svg class="a" style="left:22px;top:853px" width="27" height="27" viewBox="0 0 27 27"><g fill="none" stroke="#3d4a52" stroke-width="1.6"><circle cx="13.5" cy="13.5" r="4"/><path d="M11.5 1.5h4l.8 3.3 2.6 1.1 2.9-1.8 2.8 2.8-1.8 2.9 1.1 2.6 3.3.8v4l-3.3.8-1.1 2.6 1.8 2.9-2.8 2.8-2.9-1.8-2.6 1.1-.8 3.3h-4l-.8-3.3-2.6-1.1-2.9 1.8-2.8-2.8 1.8-2.9-1.1-2.6-3.3-.8v-4l3.3-.8 1.1-2.6-1.8-2.9 2.8-2.8 2.9 1.8 2.6-1.1z" stroke-linejoin="round"/></g></svg>
<svg class="a" style="left:22px;top:898px" width="27" height="27" viewBox="0 0 27 27"><g fill="none" stroke="#3d4a52" stroke-width="1.8"><circle cx="11" cy="11" r="9"/><path d="M17.5 17.5l8 8"/></g></svg>
<svg class="a" style="left:22px;top:942px" width="26" height="28" viewBox="0 0 26 28"><g fill="none" stroke="#3d4a52" stroke-width="1.6"><path d="M8 6a5 5 0 0 1 10 0"/><path d="M5 9h16v9a8 8 0 0 1-16 0z"/><path d="M13 9v17M1 11l4 2M25 11l-4 2M1 18h4M25 18h-4M1 25l4-3M25 25l-4-3M9 1l1.5 3M17 1l-1.5 3"/></g></svg>

<div id="rightbar" class="a"></div>
<svg class="a" style="left:1883px;top:126px" width="20" height="20" viewBox="0 0 20 20"><g fill="none" stroke="#fff" stroke-width="1.6"><rect x="1" y="13" width="3" height="6"/><rect x="6" y="8" width="3" height="11"/><rect x="11" y="11" width="3" height="8"/><rect x="16" y="1" width="3" height="18"/></g></svg>
<svg class="a" style="left:1883px;top:180px" width="21" height="21" viewBox="0 0 21 21"><path d="M2 19l1-5L14.5 2.5l4 4L7 18z M12.5 4.5l4 4" fill="none" stroke="#8a9299" stroke-width="1.6" stroke-linejoin="round"/></svg>
<svg class="a" style="left:1882px;top:236px" width="22" height="22" viewBox="0 0 22 22"><g fill="none" stroke="#8a9299" stroke-width="1.6"><circle cx="11" cy="11" r="9.5"/><path d="M11 5.5V11l3 2.5"/></g></svg>


<!-- ============ TASKBAR ============ -->

<div id="taskbar" class="a"></div>
<svg class="a" style="left:19px;top:1044px" width="22" height="21" viewBox="0 0 22 21"><g fill="#fff"><path d="M0 3l9-1.3V10H0z"/><path d="M10 1.5L22 0v10H10z"/><path d="M0 11h9v8.3L0 18z"/><path d="M10 11h12v10l-12-1.6z"/></g></svg>
<div class="a" style="left:60px;top:1030px;width:360px;height:50px;background:#f0f0f0;border-top:1px solid #d0d0d0"></div>
<svg class="a" style="left:74px;top:1044px" width="22" height="22" viewBox="0 0 22 22"><g fill="none" stroke="#1f1f1f" stroke-width="1.6"><circle cx="13" cy="8.5" r="7"/><path d="M8 13.5L1 20.5"/></g></svg>
<div class="t" style="left:110px;top:1046px;font-size:18.5px;color:#1f1f1f">Type here to search</div>
<!-- books -->
<div class="a" style="left:325px;top:1062px;width:45px;height:10px;background:#e9c95a;border-radius:2px"></div>
<div class="a" style="left:338px;top:1064px;width:22px;height:6px;background:#e98a9a;border-radius:3px"></div>
<div class="a" style="left:324px;top:1072px;width:46px;height:8px;background:#6cb548"></div>
<div class="a" style="left:370px;top:1049px;width:5px;height:31px;background:#4a8ee8"></div>
<div class="a" style="left:375px;top:1041px;width:12px;height:39px;background:#e070b8"></div>
<div class="a" style="left:387px;top:1037px;width:11px;height:43px;background:#9a70e0;border-left:1px solid #e0c040;border-right:1px solid #e0c040"></div>
<div class="a" style="left:398px;top:1041px;width:9px;height:39px;background:#d57a40"></div>
<div class="a" style="left:407px;top:1037px;width:12px;height:43px;background:#4aa068"></div>
<svg class="a" style="left:439px;top:1045px" width="21" height="20" viewBox="0 0 21 20"><g fill="none" stroke="#fff" stroke-width="1.5"><path d="M1 0v3h13V0M1 20v-3h13v3M2 5h11v10H2z"/><path d="M18 0v3M18 8v4M18 17v3"/></g></svg>
<!-- copilot -->
<svg class="a" style="left:499px;top:1042px" width="30" height="26" viewBox="0 0 30 26"><defs><linearGradient id="cpa" x1="0" y1="0" x2="0" y2="1"><stop offset="0" stop-color="#1a9af0"/><stop offset="0.5" stop-color="#40b880"/><stop offset="1" stop-color="#f8c800"/></linearGradient><linearGradient id="cpb" x1="0" y1="0" x2="0" y2="1"><stop offset="0" stop-color="#b050f0"/><stop offset="0.5" stop-color="#f05890"/><stop offset="1" stop-color="#f8a850"/></linearGradient></defs><path d="M6 1h12c1.5 0 2.5 1.2 2 2.8L16 18.5c-.4 1.5-1.6 2.5-3.2 2.5H3.5C1.8 21 .7 19.6 1.2 18L4.2 3.2C4.5 1.8 5 1 6 1z" fill="url(#cpa)"/><path d="M16 6h11c1.5 0 2.6 1.3 2.2 2.8L25.8 22.5c-.4 1.6-1.6 2.5-3.2 2.5H11.8c-1.6 0-2.6-1.4-2.2-3l3.5-14c.4-1.3 1.5-2 2.9-2z" fill="url(#cpb)"/><path d="M13 1h5c1.5 0 2.5 1.2 2 2.8L19.5 6H15z" fill="#1040c8"/></svg>
<!-- edge -->
<svg class="a" style="left:561px;top:1040px" width="30" height="30" viewBox="0 0 30 30"><defs><linearGradient id="eda" x1="0" y1="0" x2="1" y2="0.6"><stop offset="0" stop-color="#28b8f0"/><stop offset="0.6" stop-color="#38c8b0"/><stop offset="1" stop-color="#70e050"/></linearGradient><linearGradient id="edb" x1="0" y1="0" x2="0.3" y2="1"><stop offset="0" stop-color="#1a90e0"/><stop offset="1" stop-color="#1468c0"/></linearGradient></defs><path d="M15 0.5C23 0.5 29.5 6.5 29.5 13.5c0 4-3 6.5-7 6.5-3.5 0-5.5-1.5-5.5-3.5 0-1 .8-1.7.8-3 0-2.5-2.5-5-6.5-5-4.5 0-9.5 3.5-10.5 8C1.5 7.5 7.5 0.5 15 0.5z" fill="url(#eda)"/><path d="M0.8 16.5C1.5 10 6.5 7 10.5 7c4.5 0 7 2.8 7 5.5-4 0-7 3-7 6.5 0 5 5 9 11 9 2 0 4-.5 6-1.5-2.8 2.5-7 4-11.5 4C7.5 30.5 0.5 24.5 0.8 16.5z" fill="url(#edb)"/></svg>
<!-- files -->
<svg class="a" style="left:622px;top:1042px" width="30" height="26" viewBox="0 0 30 26"><path d="M1 3a2 2 0 0 1 2-2h8l3 3h13a2 2 0 0 1 2 2v17a2 2 0 0 1-2 2H3a2 2 0 0 1-2-2z" fill="#e8b830"/><rect x="1" y="8" width="28" height="17" rx="2" fill="#f5cd50"/><path d="M10 25v-6h10v6" fill="none" stroke="#2a78d8" stroke-width="3"/></svg>
<!-- store -->
<svg class="a" style="left:684px;top:1040px" width="30" height="30" viewBox="0 0 30 30"><path d="M9 7V4a2 2 0 0 1 2-2h8a2 2 0 0 1 2 2v3" fill="none" stroke="#3ab0e8" stroke-width="2"/><rect x="1" y="7" width="28" height="22" rx="3" fill="#f4f4f4"/><rect x="9" y="12" width="5.5" height="5.5" fill="#f25022"/><rect x="15.5" y="12" width="5.5" height="5.5" fill="#7fba00"/><rect x="9" y="18.5" width="5.5" height="5.5" fill="#00a4ef"/><rect x="15.5" y="18.5" width="5.5" height="5.5" fill="#ffb900"/></svg>
<!-- outlook -->
<svg class="a" style="left:746px;top:1040px" width="30" height="30" viewBox="0 0 30 30"><path d="M5 12L17 2l12 10v15a2 2 0 0 1-2 2H7a2 2 0 0 1-2-2z" fill="#3aa0f0"/><path d="M5 12l12 9 12-9v15a2 2 0 0 1-2 2H7a2 2 0 0 1-2-2z" fill="#1a78d8"/><rect x="1" y="15" width="12" height="12" rx="2" fill="#0a5cc0"/><circle cx="7" cy="21" r="3.3" fill="none" stroke="#fff" stroke-width="1.8"/></svg>
<!-- firefox -->
<svg class="a" style="left:808px;top:1039px" width="31" height="31" viewBox="0 0 31 31"><defs><radialGradient id="ff" cx="0.7" cy="0.2" r="1"><stop offset="0" stop-color="#ffe040"/><stop offset="0.4" stop-color="#ff8a20"/><stop offset="1" stop-color="#e02050"/></radialGradient></defs><circle cx="15.5" cy="17" r="13.5" fill="url(#ff)"/><path d="M20 2c4 3 6 7 6 11" stroke="#ffc030" stroke-width="4" fill="none"/><circle cx="15" cy="17" r="6.5" fill="#7a3ad8"/></svg>
<!-- chrome -->
<svg class="a" style="left:870px;top:1039px" width="31" height="31" viewBox="0 0 31 31"><circle cx="15.5" cy="15.5" r="14.5" fill="#db3c30"/><path d="M15.5 15.5L3 8.3A14.5 14.5 0 0 0 15.5 30z" fill="#1e9a52"/><path d="M15.5 15.5L15.5 30A14.5 14.5 0 0 0 28 8.3z" fill="#fcc933"/><path d="M15.5 15.5L28 8.3A14.5 14.5 0 0 0 3 8.3z" fill="#db3c30"/><circle cx="15.5" cy="15.5" r="6.8" fill="#fff"/><circle cx="15.5" cy="15.5" r="5.2" fill="#1a73e8"/></svg>
<div class="a" style="left:918px;top:1030px;width:61px;height:50px;background:#3b3b3b"></div>
<div class="a" style="left:918px;top:1077px;width:61px;height:3px;background:#7cbcf0"></div>
<svg class="a" style="left:933px;top:1039px" width="31" height="31" viewBox="0 0 31 31"><circle cx="15.5" cy="15.5" r="14.5" fill="#db3c30"/><path d="M15.5 15.5L3 8.3A14.5 14.5 0 0 0 15.5 30z" fill="#1e9a52"/><path d="M15.5 15.5L15.5 30A14.5 14.5 0 0 0 28 8.3z" fill="#fcc933"/><path d="M15.5 15.5L28 8.3A14.5 14.5 0 0 0 3 8.3z" fill="#db3c30"/><circle cx="15.5" cy="15.5" r="6.8" fill="#fff"/><circle cx="15.5" cy="15.5" r="5.2" fill="#1a73e8"/></svg>
<!-- tray -->
<div class="a" style="left:1184px;top:1042px;width:64px;height:28px;border:1.5px solid #fff;background:#000"></div>
<div class="a" style="left:1248px;top:1049px;width:3px;height:14px;border:1.5px solid #fff;border-left:none;background:#000"></div>
<div class="t" style="left:1201px;top:1047px;font-size:18px;color:#fff">A/C</div>
<div class="a" style="left:1348px;top:1042px;width:26px;height:26px;border-radius:50%;background:radial-gradient(circle at 40% 35%,#ffc020,#f07010)"></div>
<div class="a" style="left:1361px;top:1040px;width:14px;height:14px;border-radius:50%;background:#d82020"></div>
<div class="t" style="left:1365px;top:1042px;font-size:10px;font-weight:bold;color:#fff">1</div>
<div class="t" style="left:1385px;top:1046px;font-size:18px;color:#fff">20°C</div>
<div class="t" dir="rtl" style="left:1434px;top:1045px;font-size:17px;color:#fff">مشمس</div>
<svg class="a" style="left:1521px;top:1047px" width="18" height="12" viewBox="0 0 18 12"><path d="M1.5 10L9 2.5l7.5 7.5" fill="none" stroke="#fff" stroke-width="1.5"/></svg>
<div class="a" style="left:1549px;top:1044px;width:21px;height:21px;border-radius:50%;background:#d4c020"></div>
<svg class="a" style="left:1553px;top:1048px" width="13" height="13" viewBox="0 0 13 13"><path d="M6.5 1v11M1 6.5h11" stroke="#2a9a30" stroke-width="3"/></svg>
<svg class="a" style="left:1578px;top:1044px" width="25" height="22" viewBox="0 0 25 22"><path d="M5 16a4 4 0 0 1 0-8 6 6 0 0 1 11-1 4.5 4.5 0 0 1 2 9z" fill="#c8c8c8"/><circle cx="18" cy="16" r="5.5" fill="#1a70d8"/><path d="M18 14.5v4.5" stroke="#fff" stroke-width="1.5"/><circle cx="18" cy="12.8" r="0.8" fill="#fff"/></svg>
<svg class="a" style="left:1610px;top:1044px" width="22" height="21" viewBox="0 0 22 21"><g fill="none" stroke="#fff" stroke-width="1.4"><rect x="2" y="5" width="12" height="11" rx="2"/><path d="M14 8l5-3v11l-5-3M5 1.5h6M5 19.5h6"/></g></svg>
<svg class="a" style="left:1638px;top:1046px" width="24" height="17" viewBox="0 0 24 17"><g fill="none" stroke="#fff" stroke-width="1.4"><rect x="5" y="4" width="17" height="11" rx="1"/><path d="M1 9h4M2.5 2v4"/></g><rect x="7" y="6" width="13" height="7" fill="#fff"/></svg>
<svg class="a" style="left:1670px;top:1043px" width="23" height="22" viewBox="0 0 23 22"><g fill="none" stroke="#fff" stroke-width="1.4"><path d="M1 9a17 17 0 0 1 21 0M4.5 12.5a12 12 0 0 1 14 0M8 16a6 6 0 0 1 7 0"/></g><circle cx="11.5" cy="19.5" r="1.5" fill="#fff"/></svg>
<svg class="a" style="left:1698px;top:1043px" width="24" height="22" viewBox="0 0 24 22"><g fill="none" stroke="#fff" stroke-width="1.4"><path d="M2 8h4l6-5v16l-6-5H2z"/><path d="M15 7a5 5 0 0 1 0 8M18 4a9 9 0 0 1 0 14"/></g></svg>
<div class="t" style="left:1733px;top:1048px;font-size:14.8px;color:#fff">ENG</div>
<div class="t" style="left:1785px;top:1036px;font-size:15.4px;color:#fff">9:27 AM</div>
<div class="t" style="left:1777px;top:1059px;font-size:16px;color:#fff">4/19/2026</div>
<svg class="a" style="left:1866px;top:1043px" width="26" height="30" viewBox="0 0 26 30"><path d="M2 2h20v15H9l-5 4v-4H2z" fill="#fff"/><path d="M6 6h12M6 9.5h12M6 13h8" stroke="#1c1c1c" stroke-width="1.3"/><circle cx="17" cy="20" r="8" fill="#1c1c1c" stroke="#fff" stroke-width="1.3"/></svg>
<div class="t" style="left:1878px;top:1055px;font-size:14px;font-weight:bold;color:#fff">5</div>
<div class="a" style="left:1915px;top:1030px;width:1px;height:50px;background:#707070"></div>


</body></html>
